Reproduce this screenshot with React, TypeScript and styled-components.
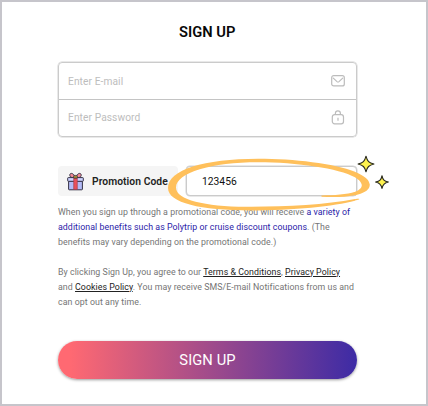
import React from "react";
import styled, { createGlobalStyle } from "styled-components";

const GlobalStyle = createGlobalStyle`
  *, *::before, *::after { box-sizing: border-box; }
  body { margin: 0; font-family: Roboto, "Liberation Sans", sans-serif; }
  input, button { font-family: inherit; }
`;

const Page = styled.main`
  width: 428px;
  height: 406px;
  padding: 20px 69.5px 0 56px;
  border: 2px solid #c6c5cb;
  background: #fff;
`;

const Title = styled.h1`
  margin: 0 0 20px;
  height: 20px;
  line-height: 20px;
  text-align: center;
  font-size: 14.7px;
  font-weight: 600;
  color: #080808;
`;

const FieldGroup = styled.div`
  height: 74.5px;
  border: 1px solid #cbcbcb;
  border-radius: 4px;
  box-shadow: 0 0 0 0.5px #d4d4d4;
`;

const Field = styled.label`
  display: flex;
  align-items: center;
  height: 36px;
  padding: 0 11px 0 9px;
  & + & { border-top: 1px solid #c4c4c4; }
`;

const FieldInput = styled.input`
  flex: 1;
  min-width: 0;
  padding: 0;
  border: 0;
  outline: 0;
  background: transparent;
  font-size: 10.2px;
  letter-spacing: 0.09px;
  color: #222;
  &::placeholder { color: #bdbdbd; opacity: 1; }
`;

const PromoRow = styled.div`
  position: relative;
  display: flex;
  gap: 8px;
  height: 30px;
  margin-top: 29.5px;
`;

const PromoLabel = styled.div`
  display: flex;
  align-items: center;
  gap: 8px;
  width: 120px;
  padding-left: 9px;
  border-radius: 4px;
  background: #f5f5f5;
  font-size: 10.3px;
  font-weight: 600;
  letter-spacing: 0.06px;
  white-space: nowrap;
  color: #222;
`;

const PromoInput = styled.input`
  flex: 1;
  min-width: 0;
  height: 30px;
  padding: 0 15px;
  border: 1px solid #cbcbcb;
  border-radius: 4px;
  box-shadow: 0 0 0 0.5px #d4d4d4;
  outline: 0;
  font-size: 10.3px;
  color: #111;
`;

const Highlight = styled.svg`
  position: absolute;
  left: 102px;
  top: -16px;
  pointer-events: none;
`;

const Paragraph = styled.p<{ $top: number }>`
  margin: ${(p) => p.$top}px 0 0;
  font-size: 8.8px;
  letter-spacing: 0.06px;
  line-height: 15px;
  white-space: nowrap;
  color: #757575;
`;

const Accent = styled.span`
  color: #2a22a8;
`;

const PolicyLink = styled.a`
  color: #222;
  text-decoration: underline;
  text-underline-offset: 1px;
`;

const SubmitButton = styled.button`
  display: block;
  width: 299px;
  height: 38px;
  margin-top: 31px;
  padding: 0;
  border: 0;
  border-radius: 19px;
  background: linear-gradient(90deg, #ff6972 4%, #3d2ba5 100%);
  box-shadow: 0 1px 3px rgba(0, 0, 0, 0.4);
  font-size: 14.7px;
  letter-spacing: 0.1px;
  color: #fff;
`;

const MailIcon = () => (
  <svg width="14" height="12" viewBox="0 0 14 12" fill="none" stroke="#bcbcbc" strokeWidth="1.2">
    <rect x=".7" y=".7" width="12.6" height="10.2" rx="2" />
    <path d="M2.3 3.1 6 6.6q1 .8 2 0l3.700-3.500" strokeLinecap="round" />
  </svg>
);

const LockIcon = () => (
  <svg width="14" height="15" viewBox="0 0 14 15" fill="none" stroke="#bcbcbc" strokeWidth="1.2">
    <rect x="1.3" y="4.6" width="11.2" height="9.2" rx="2.3" />
    <path d="M4.4 4.6V3.4a2.5 2.5 0 0 1 5 0v1.2M7 7.8v3" />
  </svg>
);

const GiftIcon = () => (
  <svg width="17" height="19" viewBox="0 0 17 19" stroke="#343145" strokeWidth="1">
    <path d="M8.5 6C5 6 2.5 5 2.8 2.7 3.2.6 6.7.6 8.5 6ZM8.5 6C12 6 14.5 5 14.2 2.7 13.8.6 10.3.6 8.5 6Z" fill="#f28a97" />
    <rect x="1.6" y="9" width="13.8" height="8.8" rx=".6" fill="#b3bbf7" />
    <rect x=".7" y="5.6" width="15.6" height="3.7" rx=".6" fill="#cdd3ff" />
    <path d="M6.7 6h3.6v11.4H6.7z" fill="#e9505b" stroke="#9d3848" strokeWidth=".6" />
    <rect x="6.6" y="3.4" width="3.8" height="2.8" rx=".7" fill="#a58b32" strokeWidth=".7" />
  </svg>
);

const HighlightMark = () => (
  <Highlight width="236" height="66" viewBox="160 150 236 66">
    <path
      fill="#ffc05b"
      d="M321.500 196.700C340 198 370 196.800 369.800 184.500C369 168.500 310 158.800 258 158.800C204 158.800 168 170 168 188C168 203 201 210.400 250 210.400C297 210.400 340 205.500 359 199.500C360 198.900 358.500 198.300 356 198.900C325 205 285 207 246 206.800C205 206.500 176 200 176 187.500C176 172.500 212 162.200 258 162.200C307 162.200 361.500 172 361.800 185C362 193.500 341 195.200 321.500 195.400Z"
    />
    <g fill="#fff34f" stroke="#29291c" strokeWidth="1.1" strokeLinejoin="round">
      <path d="M366 156.200C367.200 161.200 369 162.800 373.900 164C369 165.200 367.200 166.900 366 171.800C364.800 166.900 363 165.200 358.100 164C363 162.800 364.800 161.200 366 156.200Z" />
      <path d="M382 175.700C382.800 180 384.300 181.300 388.400 182C384.300 182.800 382.800 184.300 382 188.400C381.200 184.300 379.700 182.800 375.600 182C379.700 181.300 381.200 180 382 175.700Z" />
    </g>
  </Highlight>
);

export default function App() {
  return (
    <>
      <GlobalStyle />
      <Page>
        <Title>SIGN UP</Title>
        <FieldGroup>
          <Field>
            <FieldInput type="email" placeholder="Enter E-mail" />
            <MailIcon />
          </Field>
          <Field>
            <FieldInput type="password" placeholder="Enter Password" />
            <LockIcon />
          </Field>
        </FieldGroup>
        <PromoRow>
          <PromoLabel>
            <GiftIcon />
            Promotion Code
          </PromoLabel>
          <PromoInput defaultValue="123456" aria-label="Promotion Code" />
          <HighlightMark />
        </PromoRow>
        <Paragraph $top={8.5}>
          When you sign up through a promotional code, you will receive <Accent>a variety of</Accent>
          <br />
          <Accent>additional benefits such as Polytrip or cruise discount coupons</Accent>. (The
          <br />
          benefits may vary depending on the promotional code.)
        </Paragraph>
        <Paragraph $top={15}>
          By clicking Sign Up, you agree to our <PolicyLink>Terms &amp; Conditions</PolicyLink>,{" "}
          <PolicyLink>Privacy Policy</PolicyLink>
          <br />
          and <PolicyLink>Cookies Policy</PolicyLink>. You may receive SMS/E-mail Notifications from us and
          <br />
          can opt out any time.
        </Paragraph>
        <SubmitButton type="button">SIGN UP</SubmitButton>
      </Page>
    </>
  );
}
